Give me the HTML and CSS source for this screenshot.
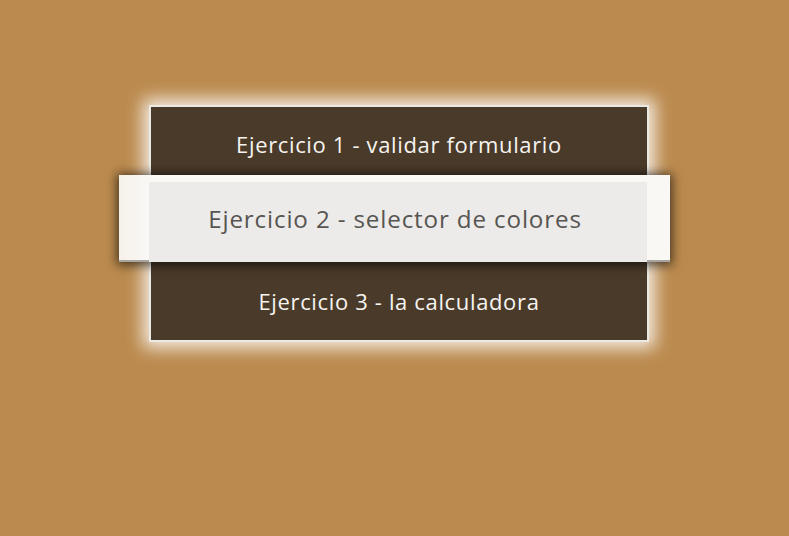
FILE: index.html
```html
<!DOCTYPE html>
<html lang="es">
<head>
<meta charset="utf-8">
<title>Ejercicios</title>
<link rel="stylesheet" href="styles.css">
</head>
<body>
<main class="page">
  <ul class="menu">
    <li class="item item-1"><a href="#">Ejercicio 1 - validar formulario</a></li>
    <li class="item item-2 active"><a href="#">Ejercicio 2 - selector de colores</a></li>
    <li class="item item-3"><a href="#">Ejercicio 3 - la calculadora</a></li>
  </ul>
</main>
</body>
</html>
```
FILE: styles.css
```css
html, body {
  margin: 0;
  padding: 0;
  background: #bb8a4e;
  height: 100%;
}
.page {
  padding: 105px 0 0 149px;
}
.menu {
  list-style: none;
  margin: 0;
  padding: 0;
  width: 500px;
  box-sizing: border-box;
  border: 2px solid #ebe9e4;
  background: #4a3a2a;
  box-shadow: 0 0 16px 6px rgba(255, 255, 255, 0.85);
}
.item {
  display: flex;
  align-items: center;
  justify-content: center;
  font-family: "Open Sans", sans-serif;
  font-size: 22px;
  font-weight: 500;
  letter-spacing: 0.65px;
}
.item a {
  color: #f6f4f0;
  text-decoration: none;
}
.item-1 { height: 75px; padding-bottom: 2px; box-sizing: border-box; }
.item-3 { height: 78px; }
.item-2 {
  height: 80px;
  position: relative;
  margin: 0 0 0 -2px;
  width: 498px;
  z-index: 1;
}
.item-2::before {
  content: "";
  position: absolute;
  top: -7px;
  bottom: 0;
  left: -30px;
  right: -23px;
  background: linear-gradient(to right, #f6f1ea, #f9f8f5 30px);
  border-bottom: 2px solid #a8a5a0;
  box-shadow: 0 1px 10px 2px rgba(0, 0, 0, 0.65);
  z-index: -2;
}
.item-2::after {
  content: "";
  position: absolute;
  inset: 0;
  background: #ecebe9;
  z-index: -1;
}
.item-2 a {
  color: #575552;
  font-size: 24.2px;
  font-weight: 400;
  letter-spacing: 0.85px;
  position: relative;
  top: -4px;
  left: -3px;
}
```
